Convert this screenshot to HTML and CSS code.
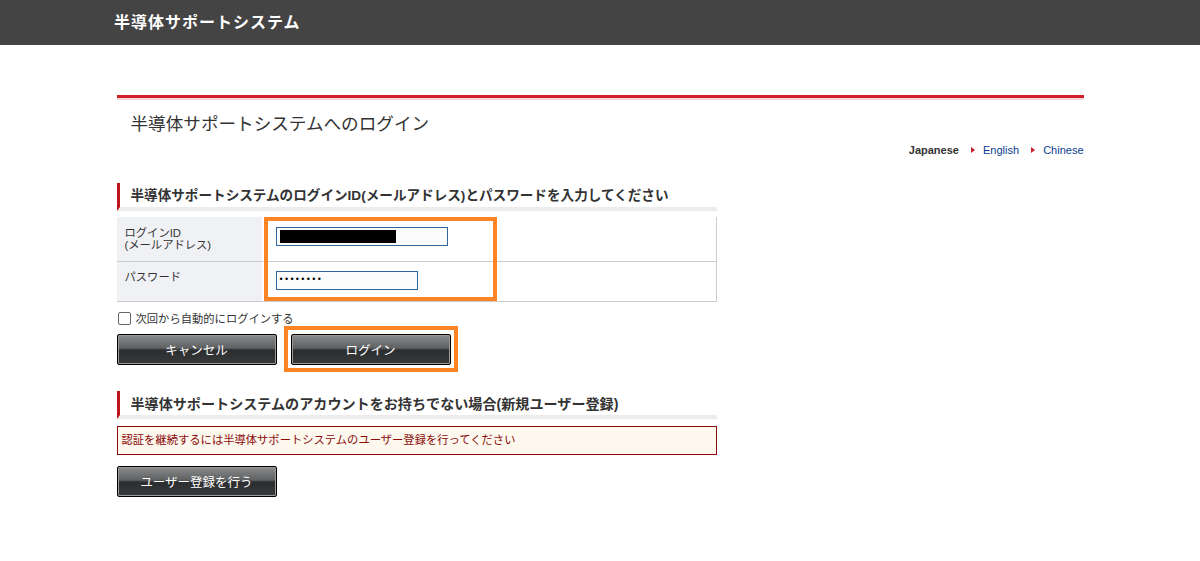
FILE: index.html
```html
<!DOCTYPE html>
<html lang="ja">
<head>
  <meta charset="UTF-8" />
  <title>半導体サポートシステム</title>
  <link rel="stylesheet" href="styles.css">
</head>
<body>

  <header class="topbar">
    <div class="site-name">半導体サポートシステム</div>
  </header>

  <main class="content">
    <h1 class="page-title">半導体サポートシステムへのログイン</h1>

    <div class="lang">
      <span class="current">Japanese</span>
      <a href="#">English</a>
      <a href="#">Chinese</a>
    </div>

    <h2 class="section-title">半導体サポートシステムのログインID(メールアドレス)とパスワードを入力してください</h2>

    <div class="form-wrap">
      <table class="login-table">
        <tr class="row-id">
          <th>ログインID<br>(メールアドレス)</th>
          <td><div class="field field-id"><span class="masked"></span></div></td>
        </tr>
        <tr class="row-pw">
          <th>パスワード</th>
          <td><div class="field field-pw">••••••••</div></td>
        </tr>
      </table>
      <!-- annotation frame -->
      <div class="mark mark-fields"></div>
    </div>

    <label class="auto-login">
      <span class="checkbox"></span>
      次回から自動的にログインする
    </label>

    <div class="buttons">
      <button class="btn">キャンセル</button>
      <button class="btn">ログイン</button>
      <div class="mark mark-login"></div>
    </div>

    <h2 class="section-title second">半導体サポートシステムのアカウントをお持ちでない場合(新規ユーザー登録)</h2>

    <div class="notice">認証を継続するには半導体サポートシステムのユーザー登録を行ってください</div>

    <button class="btn register">ユーザー登録を行う</button>
  </main>

</body>
</html>
```

FILE: styles.css
```css
body {
  margin: 0;
  font-family: "Liberation Sans", "Noto Sans CJK JP", sans-serif;
  font-size: 11.3px;
  color: #333;
  background: #fff;
}

.topbar {
  height: 45px;
  background-color: #444;
}

.site-name {
  padding-left: 114px;
  line-height: 46px;
  font-size: 16px;
  font-weight: bold;
  color: #fff;
  letter-spacing: 1px;
}

.content {
  width: 967px;
  margin: 50px auto 0;
}

.page-title {
  margin: 0;
  border-top: 3px solid #d2202b;
  box-shadow: inset 0 2px 0 #f6d8d8;
  padding: 12px 0 0 14px;
  height: 30px;
  font-size: 17.6px;
  font-weight: normal;
  color: #333;
}

.lang {
  text-align: right;
  margin-top: 2px;
  height: 16px;
  line-height: 16px;
  font-size: 11px;
}

.lang .current {
  font-weight: bold;
  color: #333;
}

.lang a {
  color: #0b3d91;
  text-decoration: none;
  margin-left: 9px;
}

.lang a::before {
  content: "";
  display: inline-block;
  border-left: 4px solid #c81e2a;
  border-top: 3px solid transparent;
  border-bottom: 3px solid transparent;
  margin-right: 8px;
  vertical-align: 1px;
}

.section-title {
  width: 586px;
  margin: 25px 0 0;
  padding: 3px 0 0 11px;
  height: 21px;
  border-left: 3px solid #c0141c;
  border-bottom: 4px solid #ececec;
  font-size: 13.6px;
  font-weight: bold;
  color: #333;
  line-height: 20px;
}

.section-title.second {
  margin-top: 26px;
  font-size: 14.1px;
}

.form-wrap {
  position: relative;
  width: 600px;
  margin-top: 6px;
}

.login-table {
  width: 600px;
  border-collapse: collapse;
  border-right: 1px solid #ccc;
}

.login-table th,
.login-table td {
  border-bottom: 1px solid #ccc;
  vertical-align: top;
  padding: 0;
}

.login-table th {
  width: 145px;
  background: #f0f1f5;
  text-align: left;
  font-weight: normal;
  padding: 10px 0 0 8px;
  box-sizing: border-box;
  line-height: 12px;
}

.row-id th, .row-id td { height: 44px; }
.row-pw th, .row-pw td { height: 39px; }

.row-pw th { padding-top: 9px; }

.login-table td {
  padding-left: 14px;
}

.field {
  box-sizing: border-box;
  height: 19px;
  border: 1px solid #2e64a0;
  background: #fcfcfc;
}

.field-id {
  width: 172px;
  margin-top: 10px;
  padding: 2px 0 0 3px;
}

.masked {
  display: block;
  width: 116px;
  height: 13px;
  background: #000;
}

.field-pw {
  width: 142px;
  margin-top: 9px;
  padding-left: 3px;
  line-height: 14px;
  font-size: 9px;
  letter-spacing: 2.3px;
  color: #000;
}

.mark {
  position: absolute;
  border: 4px solid #fd8424;
  box-sizing: border-box;
}

.mark-fields {
  left: 147px;
  top: 0;
  width: 233px;
  height: 84px;
}

.mark-login {
  left: 167px;
  top: -8px;
  width: 174px;
  height: 46px;
}

.auto-login {
  display: flex;
  align-items: center;
  gap: 5px;
  margin-top: 9px;
  height: 14px;
  color: #333;
}

.checkbox {
  width: 11px;
  height: 11px;
  border: 1px solid #666;
  border-radius: 2px;
  background: #fff;
  margin-left: 1px;
}

.buttons {
  position: relative;
  display: flex;
  gap: 14px;
  margin-top: 9px;
}

.btn {
  width: 160px;
  height: 31px;
  border: 1px solid #000;
  border-radius: 2px;
  background: linear-gradient(#8a8b8c 0%, #5e6062 45%, #2c2d2f 52%, #37393b 100%);
  box-shadow: inset 0 0 0 1px #9a9a9a;
  color: #fff;
  font-family: "Liberation Sans", "Noto Sans CJK JP", sans-serif;
  font-size: 12.5px;
  padding: 0;
}

.notice {
  margin-top: 7px;
  height: 29px;
  line-height: 27px;
  padding-left: 4px;
  box-sizing: border-box;
  width: 600px;
  border: 1px solid #8b0a0a;
  background: #fdf8ee;
  color: #8b0a0a;
}

.register {
  margin-top: 11px;
}
```
